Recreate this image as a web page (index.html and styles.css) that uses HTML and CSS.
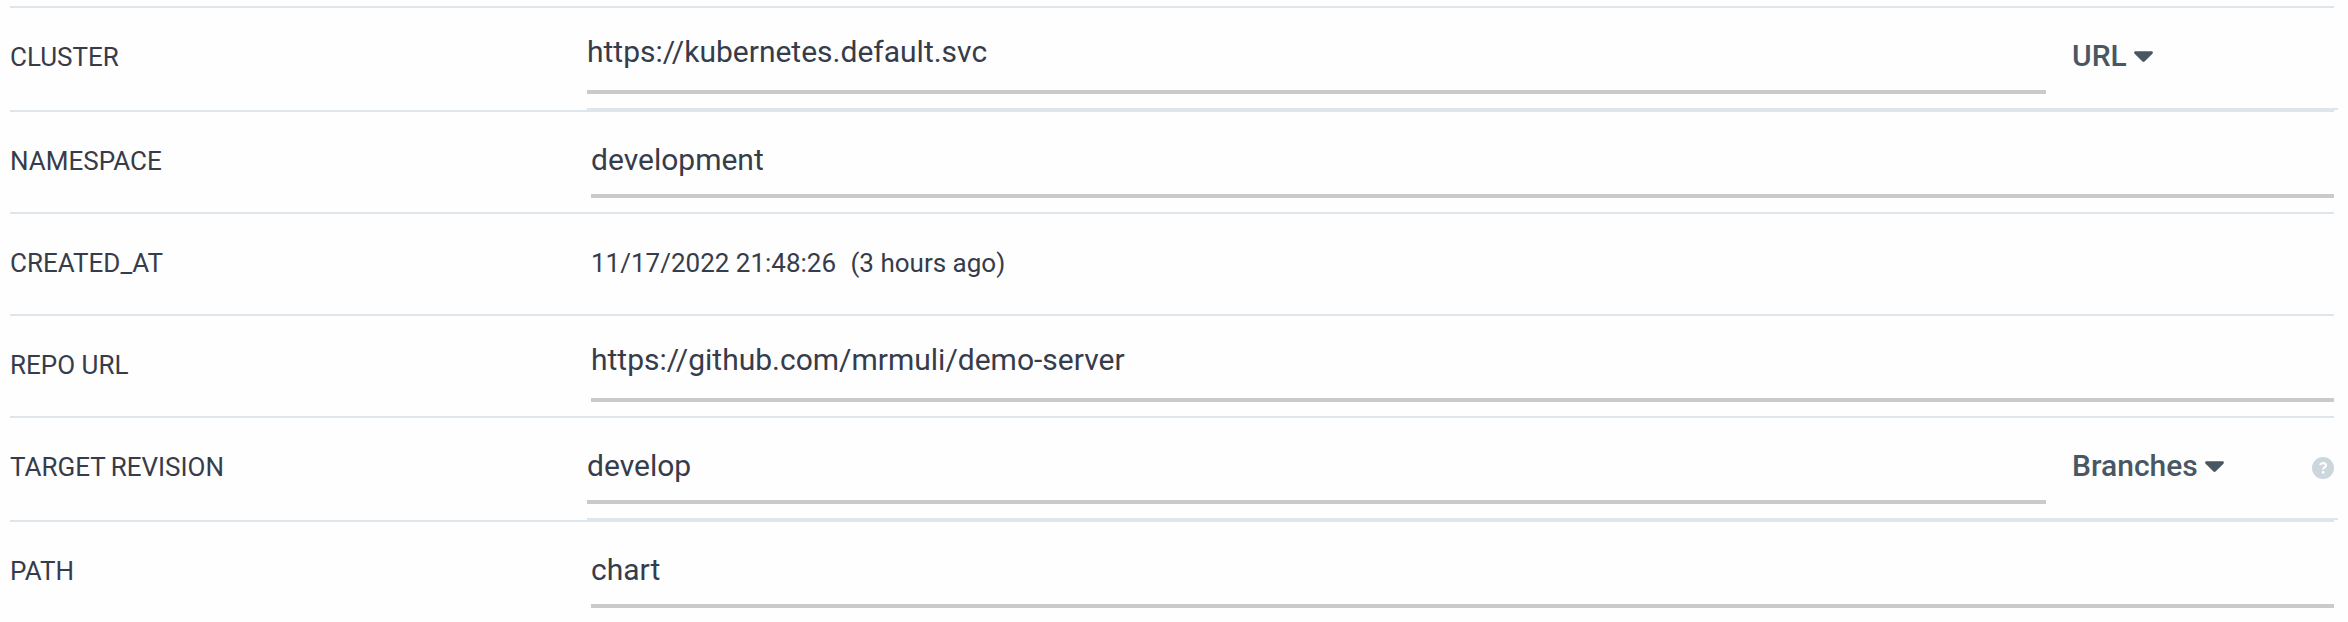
FILE: index.html
```html
<!DOCTYPE html>
<html lang="en">
<head>
<meta charset="utf-8">
<title>Application summary</title>
<link rel="stylesheet" href="styles.css">
</head>
<body>
<main class="details">
  <div class="row row--split">
    <div class="label">CLUSTER</div>
    <div class="split">
      <div class="field field--raised">https://kubernetes.default.svc</div>
      <div class="select">URL<svg class="caret" viewBox="0 0 20 12"><path d="M1.6 0H18.4C19.8 0 20.3 1.5 19.4 2.5L11.1 10.8Q10 11.8 8.9 10.8L.6 2.5C-.3 1.5 .2 0 1.6 0Z"/></svg></div>
    </div>
  </div>
  <div class="row">
    <div class="label">NAMESPACE</div>
    <div class="field">development</div>
  </div>
  <div class="row">
    <div class="label">CREATED_AT</div>
    <div class="text">11/17/2022 21:48:26 &nbsp;<span class="age">(3 hours ago)</span></div>
  </div>
  <div class="row">
    <div class="label">REPO URL</div>
    <div class="field field--raised">https://github.com/mrmuli/demo-server</div>
  </div>
  <div class="row row--split">
    <div class="label label--tight">TARGET REVISION</div>
    <div class="split">
      <div class="field">develop</div>
      <div class="select">Branches<svg class="caret" viewBox="0 0 20 12"><path d="M1.6 0H18.4C19.8 0 20.3 1.5 19.4 2.5L11.1 10.8Q10 11.8 8.9 10.8L.6 2.5C-.3 1.5 .2 0 1.6 0Z"/></svg></div>
      <svg class="help" viewBox="0 0 22 22"><circle cx="11" cy="11" r="11"/><path class="help-hook" d="M8 8.1C8.7 6.7 9.6 6.1 11 6.1C12.7 6.1 13.9 7.1 13.9 8.5C13.9 10.5 11.1 10.4 11.1 12.5"/><circle class="help-dot" cx="11.1" cy="15.4" r="1.4"/></svg>
    </div>
  </div>
  <div class="row">
    <div class="label">PATH</div>
    <div class="field">chart</div>
  </div>
</main>
</body>
</html>
```
FILE: styles.css
```css
* {
  box-sizing: border-box;
}

body {
  margin: 0;
  height: 622px;
  overflow: hidden;
  background: #fefefe;
  color: #363c4a;
  font: 26px/40px Roboto, sans-serif;
}

.details {
  margin: 6px 14px 0 10px;
  border-top: 2px solid #dee6eb;
}

.row {
  display: grid;
  grid-template-columns: 581px 1fr;
  height: 102px;
  border-bottom: 2px solid #dee6eb;
}

.row--split {
  grid-template-columns: 577px 1fr;
  height: 104px;
}

.label,
.text {
  padding-top: 29px;
}

.label--tight {
  word-spacing: -1px;
}

.age {
  margin-left: 1.5px;
}

.field {
  height: 86px;
  padding-top: 28px;
  border-bottom: 4px solid #cacaca;
  font-size: 30px;
}

.field--raised {
  padding-top: 24px;
}

.split {
  display: grid;
  grid-template-columns: 1459px 1fr 22px;
  height: 102px;
  margin-right: -4px;
  padding-right: 4px;
  border-bottom: 2px solid #dee6eb;
}

.select {
  display: flex;
  align-items: flex-start;
  padding: 28px 0 0 26px;
  color: #495763;
  font-size: 30px;
  font-weight: 500;
}

.caret {
  width: 19px;
  height: 12px;
  margin: 15px 0 0 7.5px;
  fill: currentColor;
}

.help {
  width: 22px;
  height: 22px;
  margin-top: 39px;
  fill: #ccd6dd;
}

.help-hook {
  fill: none;
  stroke: #fefefe;
  stroke-width: 2.3;
}

.help-dot {
  fill: #fefefe;
}
```
